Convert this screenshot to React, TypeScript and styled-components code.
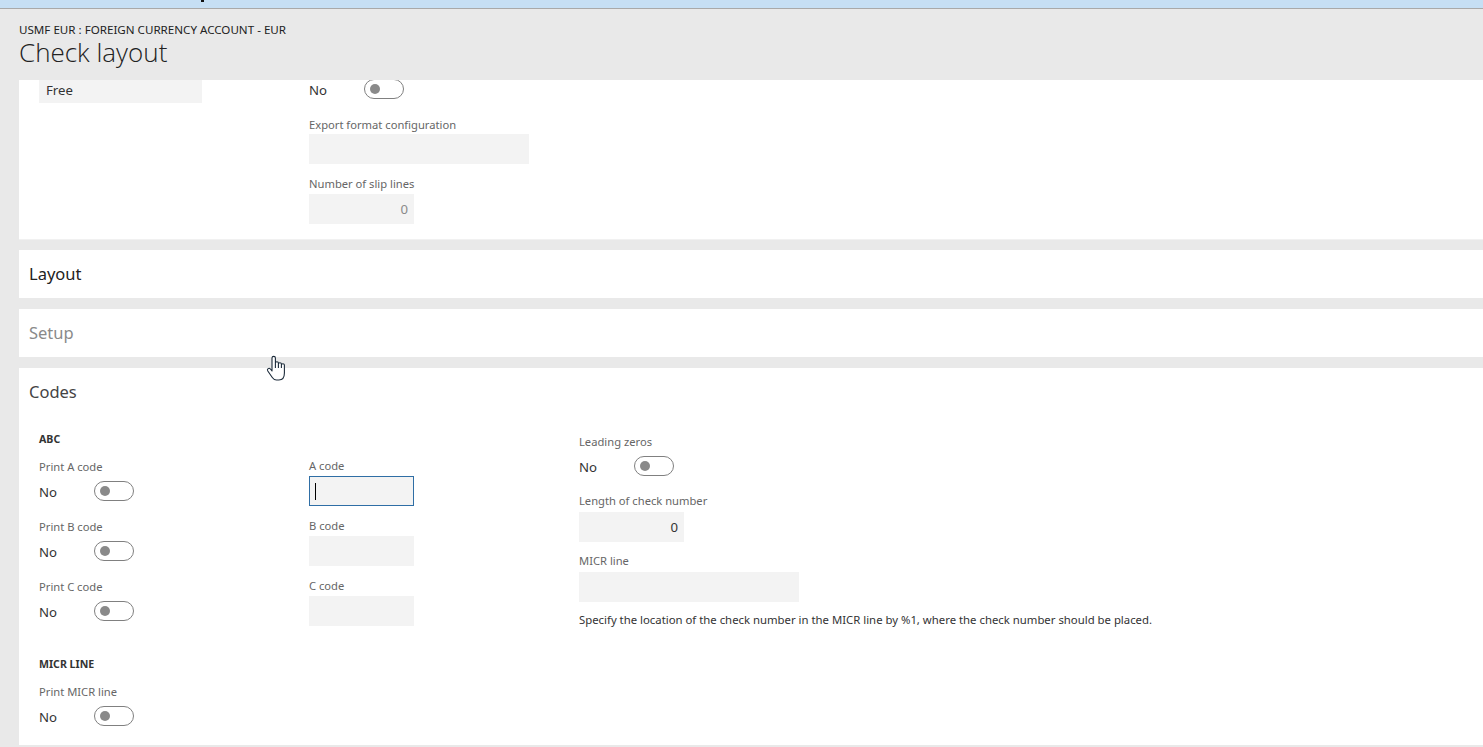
import React from "react";
import styled, { createGlobalStyle } from "styled-components";

const Global = createGlobalStyle`
  html, body { margin: 0; padding: 0; background: #e9e9e9; }
  body { font-family: "Noto Sans", "Open Sans", sans-serif; color: #333; }
`;

const Page = styled.div`
  position: relative;
  display: flex;
  flex-direction: column;
  height: 747px;
  overflow: hidden;
  background: #e9e9e9;
`;
const TopBar = styled.div`
  height: 8px;
  flex: none;
  padding-left: 201px;
  background: #c6dff4;
  border-bottom: 1px solid #a9a9a9;
`;
const TopMark = styled.div`
  width: 3px;
  height: 2px;
  background: #111;
`;
const Header = styled.header`
  height: 71px;
  flex: none;
  box-sizing: border-box;
  padding: 13px 0 0 19px;
  background: #e9e9e9;
`;
const Crumb = styled.div`
  font-size: 11.6px;
  line-height: 16px;
  color: #222;
`;
const Title = styled.h1`
  margin: 0;
  font-family: "Open Sans", "Noto Sans", sans-serif;
  font-size: 26px;
  line-height: 29px;
  font-weight: 300;
  color: #222;
`;
const Body = styled.main`
  display: flex;
  flex-direction: column;
  gap: 11px;
  padding-left: 19px;
`;
const ScrolledPanel = styled.section`
  height: 160px;
  flex: none;
  box-sizing: border-box;
  display: flex;
  flex-direction: column;
  justify-content: flex-end;
  overflow: hidden;
  padding-bottom: 15px;
  background: #fff;
  border-bottom: 1px solid #f1f1f1;
  margin-bottom: -1px;
`;
const CollapsedPanel = styled.section`
  height: 48px;
  flex: none;
  display: flex;
  align-items: center;
  padding-left: 10px;
  background: #fff;
`;
const OpenPanel = styled.section`
  height: 377px;
  flex: none;
  background: #fff;
`;
const PanelHead = styled.div`
  height: 48px;
  display: flex;
  align-items: center;
  padding-left: 10px;
`;
const PanelTitle = styled.h2<{ $tone?: string }>`
  margin: 0;
  font-size: 16.5px;
  line-height: 24px;
  font-weight: 400;
  color: ${(p) => p.$tone ?? "#222"};
`;
const Columns = styled.div`
  display: grid;
  grid-template-columns: 270px 270px 1fr;
  align-items: start;
  padding-left: 20px;
`;
const Column = styled.div<{ $top?: number }>`
  padding-top: ${(p) => p.$top ?? 0}px;
`;
const Label = styled.div<{ $gap?: number }>`
  font-size: 11.2px;
  line-height: 16px;
  color: #666;
  margin-bottom: ${(p) => p.$gap ?? 2}px;
`;
const GroupHead = styled.div<{ $top?: number }>`
  font-size: 10.6px;
  line-height: 16px;
  font-weight: 700;
  color: #333;
  margin: ${(p) => p.$top ?? 0}px 0 12px;
`;
const Field = styled.div<{ $after?: number }>`
  margin-bottom: ${(p) => p.$after ?? 12}px;
`;
const Input = styled.div<{ $width: number; $height?: number; $tone?: string }>`
  box-sizing: border-box;
  width: ${(p) => p.$width}px;
  height: ${(p) => p.$height ?? 30}px;
  display: flex;
  align-items: center;
  justify-content: flex-end;
  padding: 0 6px;
  background: #f3f3f3;
  font-size: 13.2px;
  color: ${(p) => p.$tone ?? "#333"};
`;
const TextInput = styled(Input)`
  justify-content: flex-start;
  padding: 3px 7px 0;
`;
const FocusedInput = styled(Input)`
  justify-content: flex-start;
  padding: 0 5px;
  border: 1px solid #2f6ea5;
`;
const Caret = styled.span`
  width: 1px;
  height: 17px;
  background: #000;
`;
const ToggleRow = styled.div`
  display: flex;
  align-items: center;
  height: 20px;
`;
const ToggleText = styled.span`
  width: 55px;
  font-size: 13.2px;
  line-height: 20px;
  padding-top: 2px;
  color: #333;
`;
const Toggle = styled.span`
  box-sizing: border-box;
  width: 40px;
  height: 20px;
  display: flex;
  align-items: center;
  padding-left: 5px;
  border: 1px solid #808080;
  border-radius: 10px;
  background: #fff;
  &::before {
    content: "";
    width: 10px;
    height: 10px;
    border-radius: 50%;
    background: #8a8a8a;
  }
`;
const Note = styled.div`
  font-size: 11.35px;
  line-height: 16px;
  color: #333;
  margin-top: -2px;
`;
const Cursor = styled.svg`
  position: absolute;
  left: 266px;
  top: 355px;
`;

function ToggleField({ label, after = 18 }: { label: string; after?: number }) {
  return (
    <Field $after={after}>
      <Label $gap={6}>{label}</Label>
      <ToggleRow>
        <ToggleText>No</ToggleText>
        <Toggle />
      </ToggleRow>
    </Field>
  );
}

export default function App() {
  return (
    <Page>
      <Global />
      <TopBar>
        <TopMark />
      </TopBar>
      <Header>
        <Crumb>USMF EUR : FOREIGN CURRENCY ACCOUNT - EUR</Crumb>
        <Title>Check layout</Title>
      </Header>
      <Body>
        <ScrolledPanel>
          <Columns>
            <Column>
              <TextInput $width={163}>Free</TextInput>
            </Column>
            <Column $top={6}>
              <Field $after={18}>
                <ToggleRow>
                  <ToggleText>No</ToggleText>
                  <Toggle />
                </ToggleRow>
              </Field>
              <Field>
                <Label $gap={1}>Export format configuration</Label>
                <Input $width={220} />
              </Field>
              <Field $after={0}>
                <Label>Number of slip lines</Label>
                <Input $width={105} $tone="#8a8a8a">0</Input>
              </Field>
            </Column>
          </Columns>
        </ScrolledPanel>
        <CollapsedPanel>
          <PanelTitle>Layout</PanelTitle>
        </CollapsedPanel>
        <CollapsedPanel>
          <PanelTitle $tone="#8a8a8a">Setup</PanelTitle>
        </CollapsedPanel>
        <OpenPanel>
          <PanelHead>
            <PanelTitle $tone="#444">Codes</PanelTitle>
          </PanelHead>
          <Columns>
            <Column $top={15}>
              <GroupHead>ABC</GroupHead>
              <ToggleField label="Print A code" />
              <ToggleField label="Print B code" />
              <ToggleField label="Print C code" after={0} />
              <GroupHead $top={35}>MICR LINE</GroupHead>
              <ToggleField label="Print MICR line" after={0} />
            </Column>
            <Column $top={42}>
              <Field>
                <Label>A code</Label>
                <FocusedInput $width={105}>
                  <Caret />
                </FocusedInput>
              </Field>
              <Field>
                <Label>B code</Label>
                <Input $width={105} />
              </Field>
              <Field>
                <Label>C code</Label>
                <Input $width={105} />
              </Field>
            </Column>
            <Column $top={18}>
              <ToggleField label="Leading zeros" after={17} />
              <Field $after={11}>
                <Label $gap={3}>Length of check number</Label>
                <Input $width={105}>0</Input>
              </Field>
              <Field>
                <Label $gap={3}>MICR line</Label>
                <Input $width={220} />
              </Field>
              <Note>Specify the location of the check number in the MICR line by %1, where the check number should be placed.</Note>
            </Column>
          </Columns>
        </OpenPanel>
      </Body>
      <Cursor width="22" height="28" viewBox="0 0 22 28" aria-hidden="true">
        <path
          d="M6 16V3c0-2.2 3.4-2.2 3.4 0V8c0-1.7 3-1.7 3 0v1c0-1.7 3-1.7 3 0v1c0-1.6 3-1.6 3 0V18c0 4-2 7-5.5 7H10.5c-2 0-3.2-1-4.2-2.5L1.8 16c-1.2-2 1.2-3.6 2.6-2L6 16ZM9.4 8v5M12.4 9v4M15.4 10v3"
          fill="#fff"
          stroke="#1c2b3a"
          strokeWidth="1.1"
          strokeLinejoin="round"
        />
      </Cursor>
    </Page>
  );
}
